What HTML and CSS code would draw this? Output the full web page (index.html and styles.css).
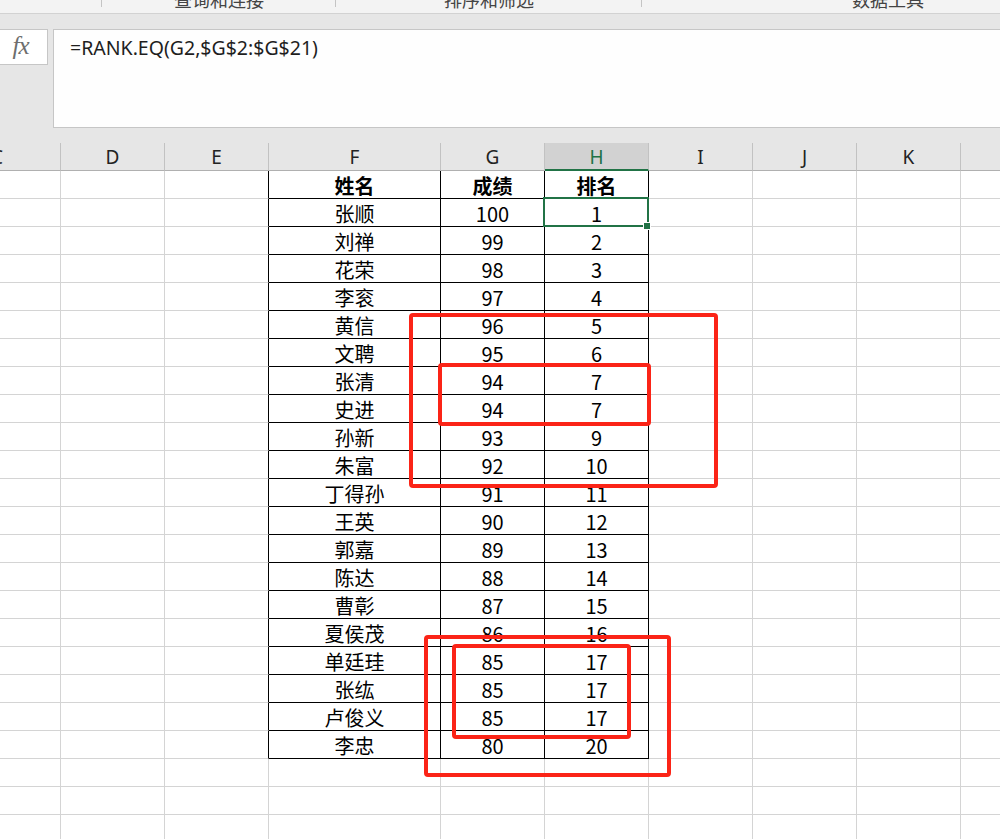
FILE: index.html
```html
<!DOCTYPE html>
<html lang="zh">
<head>
<meta charset="utf-8">
<title>RANK.EQ</title>
<link rel="stylesheet" href="styles.css">
</head>
<body>
<div class="ribbon">
  <div class="grp g0"></div>
  <div class="grp g1"><span class="glabel">查询和连接</span></div>
  <div class="grp g2"><span class="glabel">排序和筛选</span></div>
  <div class="grp g3"><span class="glabel">数据工具</span></div>
</div>
<div class="band"></div>
<div class="fbar">
  <div class="fx">fx</div>
  <div class="finput">=RANK.EQ(G2,$G$2:$G$21)</div>
</div>
<div class="view">
  <div class="sheet">
    <div class="h hc"><span>C</span></div><div class="h">D</div><div class="h">E</div><div class="h">F</div><div class="h">G</div><div class="h hsel">H</div><div class="h">I</div><div class="h">J</div><div class="h">K</div><div class="h"></div>

    <div class="c"></div><div class="c"></div><div class="c tl"></div><div class="c t b">姓名</div><div class="c t b">成绩</div><div class="c t b">排名</div><div class="c"></div><div class="c"></div><div class="c"></div><div class="c"></div>
    <div class="c"></div><div class="c"></div><div class="c tl"></div><div class="c t">张顺</div><div class="c t">100</div><div class="c t">1</div><div class="c"></div><div class="c"></div><div class="c"></div><div class="c"></div>
    <div class="c"></div><div class="c"></div><div class="c tl"></div><div class="c t">刘禅</div><div class="c t">99</div><div class="c t">2</div><div class="c"></div><div class="c"></div><div class="c"></div><div class="c"></div>
    <div class="c"></div><div class="c"></div><div class="c tl"></div><div class="c t">花荣</div><div class="c t">98</div><div class="c t">3</div><div class="c"></div><div class="c"></div><div class="c"></div><div class="c"></div>
    <div class="c"></div><div class="c"></div><div class="c tl"></div><div class="c t">李衮</div><div class="c t">97</div><div class="c t">4</div><div class="c"></div><div class="c"></div><div class="c"></div><div class="c"></div>
    <div class="c"></div><div class="c"></div><div class="c tl"></div><div class="c t">黄信</div><div class="c t">96</div><div class="c t">5</div><div class="c"></div><div class="c"></div><div class="c"></div><div class="c"></div>
    <div class="c"></div><div class="c"></div><div class="c tl"></div><div class="c t">文聘</div><div class="c t">95</div><div class="c t">6</div><div class="c"></div><div class="c"></div><div class="c"></div><div class="c"></div>
    <div class="c"></div><div class="c"></div><div class="c tl"></div><div class="c t">张清</div><div class="c t">94</div><div class="c t">7</div><div class="c"></div><div class="c"></div><div class="c"></div><div class="c"></div>
    <div class="c"></div><div class="c"></div><div class="c tl"></div><div class="c t">史进</div><div class="c t">94</div><div class="c t">7</div><div class="c"></div><div class="c"></div><div class="c"></div><div class="c"></div>
    <div class="c"></div><div class="c"></div><div class="c tl"></div><div class="c t">孙新</div><div class="c t">93</div><div class="c t">9</div><div class="c"></div><div class="c"></div><div class="c"></div><div class="c"></div>
    <div class="c"></div><div class="c"></div><div class="c tl"></div><div class="c t">朱富</div><div class="c t">92</div><div class="c t">10</div><div class="c"></div><div class="c"></div><div class="c"></div><div class="c"></div>
    <div class="c"></div><div class="c"></div><div class="c tl"></div><div class="c t">丁得孙</div><div class="c t">91</div><div class="c t">11</div><div class="c"></div><div class="c"></div><div class="c"></div><div class="c"></div>
    <div class="c"></div><div class="c"></div><div class="c tl"></div><div class="c t">王英</div><div class="c t">90</div><div class="c t">12</div><div class="c"></div><div class="c"></div><div class="c"></div><div class="c"></div>
    <div class="c"></div><div class="c"></div><div class="c tl"></div><div class="c t">郭嘉</div><div class="c t">89</div><div class="c t">13</div><div class="c"></div><div class="c"></div><div class="c"></div><div class="c"></div>
    <div class="c"></div><div class="c"></div><div class="c tl"></div><div class="c t">陈达</div><div class="c t">88</div><div class="c t">14</div><div class="c"></div><div class="c"></div><div class="c"></div><div class="c"></div>
    <div class="c"></div><div class="c"></div><div class="c tl"></div><div class="c t">曹彰</div><div class="c t">87</div><div class="c t">15</div><div class="c"></div><div class="c"></div><div class="c"></div><div class="c"></div>
    <div class="c"></div><div class="c"></div><div class="c tl"></div><div class="c t">夏侯茂</div><div class="c t">86</div><div class="c t">16</div><div class="c"></div><div class="c"></div><div class="c"></div><div class="c"></div>
    <div class="c"></div><div class="c"></div><div class="c tl"></div><div class="c t">单廷珪</div><div class="c t">85</div><div class="c t">17</div><div class="c"></div><div class="c"></div><div class="c"></div><div class="c"></div>
    <div class="c"></div><div class="c"></div><div class="c tl"></div><div class="c t">张纮</div><div class="c t">85</div><div class="c t">17</div><div class="c"></div><div class="c"></div><div class="c"></div><div class="c"></div>
    <div class="c"></div><div class="c"></div><div class="c tl"></div><div class="c t">卢俊义</div><div class="c t">85</div><div class="c t">17</div><div class="c"></div><div class="c"></div><div class="c"></div><div class="c"></div>
    <div class="c"></div><div class="c"></div><div class="c tl"></div><div class="c t">李忠</div><div class="c t">80</div><div class="c t">20</div><div class="c"></div><div class="c"></div><div class="c"></div><div class="c"></div>

    <div class="c"></div><div class="c"></div><div class="c"></div><div class="c"></div><div class="c"></div><div class="c"></div><div class="c"></div><div class="c"></div><div class="c"></div><div class="c"></div>
    <div class="c"></div><div class="c"></div><div class="c"></div><div class="c"></div><div class="c"></div><div class="c"></div><div class="c"></div><div class="c"></div><div class="c"></div><div class="c"></div>
    <div class="c"></div><div class="c"></div><div class="c"></div><div class="c"></div><div class="c"></div><div class="c"></div><div class="c"></div><div class="c"></div><div class="c"></div><div class="c"></div>
  </div>

  <div class="selection"></div>
  <div class="handle"></div>

  <div class="mark m1"></div>
  <div class="mark m2"></div>
  <div class="mark m3"></div>
  <div class="mark m4"></div>
</div>
</body>
</html>
```

FILE: styles.css
```css
* { box-sizing: border-box; }

html, body {
  margin: 0;
  padding: 0;
}

body {
  width: 1000px;
  height: 839px;
  overflow: hidden;
  background: #ffffff;
  font-family: "Noto Sans", "Noto Sans CJK SC", sans-serif;
  color: #000;
}

/* ribbon remnant */
.ribbon {
  display: flex;
  height: 14px;
  background: #f3f3f3;
  border-bottom: 1px solid #d2d2d2;
  overflow: hidden;
}

.grp {
  position: relative;
  flex: 0 0 auto;
  display: flex;
  justify-content: center;
  overflow: hidden;
}

.grp::after {
  content: "";
  position: absolute;
  right: 0;
  top: 0;
  width: 1px;
  height: 7px;
  background: #c4c4c4;
}

.g0 { width: 102px; }
.g1 { width: 234px; }
.g2 { width: 306px; }
.g3 { width: 492px; }
.g3::after { display: none; }

.glabel {
  font-family: "Noto Sans CJK SC", sans-serif;
  font-size: 18px;
  line-height: 18px;
  margin-top: -10px;
  color: #444;
  white-space: nowrap;
}

.band {
  height: 15px;
  background: #e6e6e6;
}

/* formula bar */
.fbar {
  display: flex;
  align-items: flex-start;
  gap: 5px;
  height: 114px;
  background: #e6e6e6;
}

.fx {
  flex: 0 0 48px;
  height: 36px;
  background: #fff;
  border: 1px solid #c6c6c6;
  border-left: none;
  display: flex;
  align-items: center;
  justify-content: center;
  padding: 0 6px 3px 0;
  font-family: "Liberation Serif", serif;
  font-style: italic;
  font-size: 25px;
  color: #6e6e6e;
  letter-spacing: -1px;
}

.finput {
  flex: 1 1 auto;
  height: 99px;
  margin-right: -4px;
  background: #fefefe;
  border: 1px solid #c6c6c6;
  padding: 4px 0 0 16px;
  font-family: "Noto Sans", sans-serif;
  font-size: 19.5px;
  line-height: 28px;
  color: #1e1e1e;
}

/* sheet */
.view {
  position: relative;
}

.sheet {
  display: grid;
  grid-template-columns: 61px 104px 104px 172px 104px 104px 104px 104px 104px 60px;
  grid-auto-rows: 28px;
  width: 1021px;
}

.h {
  background: #e6e6e6;
  border-right: 1px solid #c2c2c2;
  border-bottom: 1px solid #b0b0b0;
  display: flex;
  align-items: center;
  justify-content: center;
  padding-top: 1px;
  font-family: "Noto Sans", sans-serif;
  font-size: 19px;
  color: #222;
}

.hc {
  justify-content: flex-end;
  overflow: hidden;
}

.hc span {
  margin-right: 57px;
}

.hsel {
  background: #d2d2d2;
  color: #217346;
  border-bottom: 2px solid #217346;
}

.c {
  border-right: 1px solid #d4d4d4;
  border-bottom: 1px solid #d4d4d4;
  display: flex;
  align-items: center;
  justify-content: center;
  font-family: "Noto Sans CJK SC", sans-serif;
  font-size: 20px;
  line-height: 1;
  padding-top: 2px;
  color: #000;
}

.tl {
  border-right-color: #000;
}

.t {
  border-right-color: #000;
  border-bottom-color: #000;
}

.b {
  font-weight: 700;
}

/* selection */
.selection {
  position: absolute;
  left: 543px;
  top: 54px;
  width: 106px;
  height: 30px;
  border: 2px solid #217346;
}

.handle {
  position: absolute;
  left: 643px;
  top: 79px;
  width: 8px;
  height: 8px;
  background: #217346;
  border: 1px solid #fff;
}

/* red annotation boxes */
.mark {
  position: absolute;
  border: 4px solid #fb2417;
  border-radius: 4px;
}

.m1 { left: 409px; top: 170px; width: 309px; height: 175px; }
.m2 { left: 438px; top: 220px; width: 213px; height: 63px; }
.m3 { left: 424px; top: 492px; width: 247px; height: 142px; }
.m4 { left: 452px; top: 501px; width: 179px; height: 95px; }
```
